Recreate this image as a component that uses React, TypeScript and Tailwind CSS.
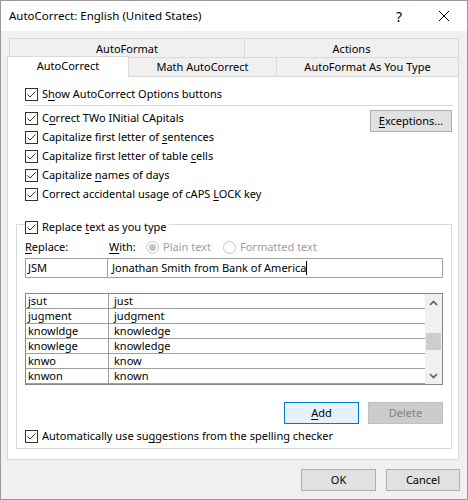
import React from 'react';

const font = { fontFamily: '"Noto Sans", "Liberation Sans", sans-serif' };

const U: React.FC<{ children: React.ReactNode }> = ({ children }) => (
  <span className="underline decoration-1 underline-offset-[2px]">{children}</span>
);

// 13px Windows style checkbox, always checked here
const CheckBox: React.FC = () => (
  <span className="w-[13px] h-[13px] shrink-0 border border-[#333333] bg-white flex items-center justify-center">
    <svg width="11" height="11" viewBox="0 0 11 11">
      <polyline points="1.5,5.5 4,8 9.5,2.5" fill="none" stroke="#333333" strokeWidth="1" />
    </svg>
  </span>
);

const CheckRow: React.FC<{ children: React.ReactNode }> = ({ children }) => (
  <div className="h-[19px] flex items-center gap-[4px]">
    <CheckBox />
    <span className="whitespace-nowrap">{children}</span>
  </div>
);

const Radio: React.FC<{ checked?: boolean; label: string }> = ({ checked, label }) => (
  <div className="flex items-center gap-[4px] text-[#a0a0a0]">
    <span className="w-[13px] h-[13px] rounded-full border border-[#c5c5c5] bg-white flex items-center justify-center">
      {checked && <span className="w-[7px] h-[7px] rounded-full bg-[#c5c5c5]" />}
    </span>
    <span>{label}</span>
  </div>
);

const entries: [string, string][] = [
  ['jsut', 'just'],
  ['jugment', 'judgment'],
  ['knowldge', 'knowledge'],
  ['knowlege', 'knowledge'],
  ['knwo', 'know'],
  ['knwon', 'known'],
];

export default function App() {
  return (
    <div
      className="w-[468px] h-[500px] border border-[#9a9a9a] bg-[#f0f0f0] flex flex-col text-[11px] text-black overflow-hidden"
      style={font}
    >
      {/* Title bar */}
      <div className="h-[30px] bg-white flex items-center shrink-0">
        <span className="pl-[8px] text-[11.5px] flex-1">AutoCorrect: English (United States)</span>
        <span className="text-[14px] w-[14px] mr-[32px] text-center">?</span>
        <svg width="12" height="12" viewBox="0 0 12 12" className="mr-[17px]">
          <path d="M1 1 L11 11 M11 1 L1 11" stroke="#000" strokeWidth="1" />
        </svg>
      </div>

      {/* Tabs */}
      <div className="ml-[6px] w-[452px] mt-[7px]">
        <div className="flex h-[19px] ml-[2px]">
          <div className="w-[235px] border-l border-t border-[#d9d9d9] flex items-center justify-center pt-[2px]">AutoFormat</div>
          <div className="w-[215px] border-l border-t border-r border-[#d9d9d9] flex items-center justify-center pt-[2px]">Actions</div>
        </div>
        <div className="flex h-[19px] items-end">
          <div className="relative z-10 w-[122px] h-[21px] -mb-[1px] bg-white border-l border-t border-r border-[#d9d9d9] flex items-center justify-center pb-[1px]">
            AutoCorrect
          </div>
          <div className="w-[148px] h-[19px] border-t border-r border-[#d9d9d9] flex items-center justify-center pt-[1px]">Math AutoCorrect</div>
          <div className="w-[182px] h-[19px] border-t border-r border-[#d9d9d9] flex items-center justify-center pt-[1px]">AutoFormat As You Type</div>
        </div>

        {/* Panel */}
        <div className="bg-white border border-[#d9d9d9] pt-[8px] pb-[10px]">
          <div className="pl-[17px]">
            <CheckRow>
              S<U>h</U>ow AutoCorrect Options buttons
            </CheckRow>
          </div>
          <div className="ml-[17px] w-[428px] h-px bg-[#d9d9d9] mt-[1px]" />
          <div className="flex mt-[3px] pl-[17px] pr-[6px]">
            <div className="flex-1">
              <CheckRow>
                C<U>o</U>rrect TWo INitial CApitals
              </CheckRow>
              <CheckRow>
                Capitalize first letter of <U>s</U>entences
              </CheckRow>
              <CheckRow>
                Capitalize first letter of table <U>c</U>ells
              </CheckRow>
              <CheckRow>
                Capitalize <U>n</U>ames of days
              </CheckRow>
              <CheckRow>
                Correct accidental usage of cAPS <U>L</U>OCK key
              </CheckRow>
            </div>
            <button className="w-[82px] h-[22px] mt-[1px] bg-[#e1e1e1] border border-[#adadad] flex items-center justify-center">
              <span>
                <U>E</U>xceptions...
              </span>
            </button>
          </div>

          {/* Replace group */}
          <div className="ml-[8px] mr-[6px] mt-[20px] border border-[#d9d9d9] pb-[2px]">
            <div className="-mt-[7px] ml-[8px] w-fit bg-white pr-[2px]">
              <CheckRow>
                Replace <U>t</U>ext as you type
              </CheckRow>
            </div>
            <div className="h-[21px] flex items-center pl-[8px]">
              <span className="w-[84px]">
                <U>R</U>eplace:
              </span>
              <span className="w-[37px]">
                <U>W</U>ith:
              </span>
              <div className="w-[77px]">
                <Radio checked label="Plain text" />
              </div>
              <Radio label="Formatted text" />
            </div>
            <div className="mx-[8px] h-[20px] border border-[#a0a0a0] flex">
              <div className="w-[82px] border-r border-[#a0a0a0] pl-[2px] flex items-center">JSM</div>
              <div className="flex-1 pl-[4px] flex items-center">
                Jonathan Smith from Bank of America
                <span className="inline-block w-px h-[14px] bg-black" />
              </div>
            </div>

            {/* Entries list */}
            <div className="mx-[8px] mt-[15px] h-[92px] border border-[#828790] flex">
              <div className="flex-1">
                {entries.map(([from, to]) => (
                  <div key={from} className="h-[15px] border-b border-[#a0a0a0] flex">
                    <div className="w-[82px] pl-[2px] flex items-center">{from}</div>
                    <div className="flex-1 border-l border-[#a0a0a0] pl-[5px] flex items-center">{to}</div>
                  </div>
                ))}
              </div>
              <div className="w-[17px] bg-[#f0f0f0] flex flex-col items-center">
                <svg width="9" height="6" viewBox="0 0 9 6" className="mt-[6px]">
                  <polyline points="1,5 4.5,1.5 8,5" fill="none" stroke="#606060" strokeWidth="1.6" />
                </svg>
                <div className="w-[15px] h-[17px] bg-[#cdcdcd] mt-[27px]" />
                <div className="flex-1" />
                <svg width="9" height="6" viewBox="0 0 9 6" className="mb-[5px]">
                  <polyline points="1,1 4.5,4.5 8,1" fill="none" stroke="#606060" strokeWidth="1.6" />
                </svg>
              </div>
            </div>

            <div className="flex justify-end gap-[9px] mr-[8px] mt-[17px]">
              <button className="w-[75px] h-[22px] bg-[#e5f1fb] border border-[#0078d7] flex items-center justify-center">
                <span>
                  <U>A</U>dd
                </span>
              </button>
              <button className="w-[75px] h-[22px] bg-[#cccccc] border border-[#bfbfbf] text-[#838383] flex items-center justify-center">
                Delete
              </button>
            </div>

            <div className="pl-[8px] mt-[3px]">
              <CheckRow>
                Automatically use su<U>g</U>gestions from the spelling checker
              </CheckRow>
            </div>
          </div>
        </div>
      </div>

      {/* Footer */}
      <div className="flex justify-end gap-[10px] pr-[7px] mt-[9px]">
        <button className="w-[75px] h-[22px] bg-[#e1e1e1] border border-[#adadad]">OK</button>
        <button className="w-[74px] h-[22px] bg-[#e1e1e1] border border-[#adadad]">Cancel</button>
      </div>
    </div>
  );
}
